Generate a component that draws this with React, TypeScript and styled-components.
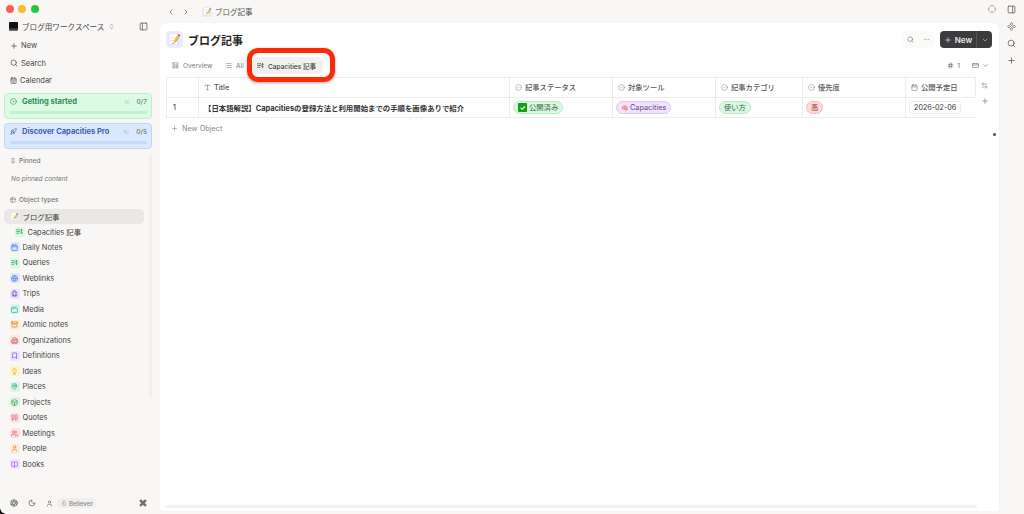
import React from "react";
import styled, { createGlobalStyle } from "styled-components";
import {
  Plus, Search, CalendarDays, CircleDot, EyeOff, Rocket, Pin, Table2, PanelRight, ChevronLeft, ChevronRight,
  ChevronsUpDown, ChevronDown, Ellipsis, List, LayoutPanelTop, Type, CircleCheck, ArrowLeftRight,
  Calendar, Globe, Luggage, Tv, Archive, Building2, Bookmark, Lightbulb, MapPin, Box, Quote, Users, User,
  BookOpen, Moon, Command, Flame, CircleDashed, Component, Hash, CreditCard, Aperture,
} from "lucide-react";

const GlobalStyle = createGlobalStyle`
  html, body { margin: 0; padding: 0; background: #f8f7f5; }
  body { font-family: Inter, "Noto Sans CJK JP", sans-serif; color: #3b3b3b; }
  * { box-sizing: border-box; }
`;

const Page = styled.div`
  position: relative;
  width: 1024px;
  height: 514px;
  overflow: hidden;
  display: flex;
  background: #f8f7f5;
`;

const Sidebar = styled.aside`
  position: relative;
  width: 160px;
  flex: none;
  display: flex;
  flex-direction: column;
  height: 514px;
`;

const TrafficLights = styled.div`
  display: flex;
  gap: 4.4px;
  padding: 4.5px 0 0 6px;
  height: 17px;
`;

const Light = styled.span<{ $c: string }>`
  width: 8px;
  height: 8px;
  border-radius: 50%;
  background: ${(p) => p.$c};
`;

const WorkspaceRow = styled.div`
  display: flex;
  align-items: center;
  height: 18px;
  padding: 0 12px 0 9px;
  font-size: 7.6px;
  color: #4a4a4a;
  gap: 4px;
`;

const WorkspaceLogo = styled.span`
  width: 9px;
  height: 9px;
  background: linear-gradient(#111 60%, #777);
  border-radius: 1px;
`;

const WorkspaceEnd = styled.span`
  margin-left: auto;
  display: flex;
  color: #555;
`;

const NavRow = styled.div`
  display: flex;
  align-items: center;
  gap: 3px;
  height: 17.5px;
  padding-left: 10px;
  font-size: 7.5px;
  color: #444;
`;

const NavGroup = styled.div`
  margin-top: 2px;
  margin-bottom: 3px;
`;

const TaskCard = styled.div<{ $blue?: boolean }>`
  margin: 0 8px 4px 4px;
  height: 26px;
  border-radius: 4px;
  border: 1px solid ${(p) => (p.$blue ? "#bcd6fb" : "#bdf0c9")};
  background: ${(p) => (p.$blue ? "#dbe9fe" : "#dcfbe4")};
  padding: 0 4px 0 5px;
  color: ${(p) => (p.$blue ? "#3f5fc4" : "#2f8f55")};
`;

const TaskTop = styled.div`
  display: flex;
  align-items: center;
  height: 16px;
  gap: 5px;
  font-size: 7.5px;
  font-weight: 700;
`;

const TaskCount = styled.span`
  margin-left: auto;
  display: flex;
  align-items: center;
  gap: 7px;
  font-size: 6.5px;
  font-weight: 600;
  color: #7f8a84;
`;

const TaskBar = styled.div<{ $blue?: boolean }>`
  height: 3px;
  margin: 1px 0 0 0;
  border-radius: 2px;
  background: ${(p) => (p.$blue ? "#c5daf9" : "#c3f1cf")};
`;

const SectionLabel = styled.div<{ $top: number }>`
  display: flex;
  align-items: center;
  gap: 3px;
  margin-top: ${(p) => p.$top}px;
  padding-left: 10px;
  height: 10px;
  font-size: 6.5px;
  font-weight: 500;
  color: #777;
`;

const EmptyNote = styled.div`
  padding-left: 11px;
  margin-top: 9px;
  height: 10px;
  font-size: 6.5px;
  font-style: italic;
  color: #777;
`;

const TypeRow = styled.div<{ $active?: boolean; $indent?: boolean }>`
  display: flex;
  align-items: center;
  gap: 3px;
  height: 15.5px;
  margin-right: 16px;
  margin-left: 4px;
  padding-left: ${(p) => (p.$indent ? "10.5px" : "5.5px")};
  font-size: 7.4px;
  color: #454545;
  border-radius: 5px;
  background: ${(p) => (p.$active ? "#e9e8e5" : "transparent")};
`;

const IconChip = styled.span<{ $bg: string; $fg: string }>`
  width: 10px;
  height: 10px;
  flex: none;
  display: inline-flex;
  align-items: center;
  justify-content: center;
  border-radius: 2.5px;
  background: ${(p) => p.$bg};
  color: ${(p) => p.$fg};
`;

const TypeList = styled.div`
  margin-top: 4px;
`;

const SideScroll = styled.div`
  position: absolute;
  left: 149px;
  top: 154px;
  width: 3px;
  height: 244px;
  border-radius: 2px;
  background: #f1f0ee;
`;

const SideFooter = styled.div`
  margin-top: auto;
  height: 22px;
  display: flex;
  align-items: center;
  padding: 0 10px;
  color: #555;
  gap: 10px;
`;

const Plan = styled.span`
  display: flex;
  align-items: center;
  gap: 2px;
  height: 10px;
  padding: 0 4px;
  margin-left: -6px;
  border-radius: 5px;
  background: #f0efed;
  color: #8c8c8c;
  font-size: 6.2px;
  font-weight: 500;
`;

const FooterEnd = styled.span`
  margin-left: auto;
  margin-right: 3px;
  display: flex;
  color: #333;
`;

const MainColumn = styled.div`
  flex: 1;
  min-width: 0;
  display: flex;
  flex-direction: column;
`;

const TopBar = styled.div`
  height: 23px;
  display: flex;
  align-items: center;
  padding-left: 7px;
  font-size: 7.5px;
  color: #555;
  gap: 7px;
`;

const Crumb = styled.span`
  display: flex;
  align-items: center;
  gap: 3px;
  margin-left: 5px;
`;

const Card = styled.main`
  position: relative;
  flex: 1;
  margin-bottom: 3px;
  background: #fff;
  border-radius: 6px 6px 2px 2px;
  box-shadow: 0 0 1px #e6e4e1;
  padding: 8px 0 0 6px;
  overflow: hidden;
`;

const TitleRow = styled.div`
  display: flex;
  align-items: center;
  height: 17px;
  gap: 5px;
`;

const BigIcon = styled.span`
  width: 17px;
  height: 17px;
  border-radius: 4px;
  background: #f1eafb;
  display: flex;
  align-items: center;
  justify-content: center;
  font-size: 10.5px;
`;

const Title = styled.h1`
  margin: 0;
  font-size: 11px;
  font-weight: 700;
  color: #222;
`;

const TitleTools = styled.div`
  margin-left: auto;
  margin-right: 7px;
  display: flex;
  align-items: center;
  gap: 5px;
`;

const GhostTools = styled.div`
  display: flex;
  align-items: center;
  justify-content: space-between;
  width: 33px;
  height: 17px;
  padding: 0 5px;
  border-radius: 5px;
  background: #fafaf8;
  color: #777;
`;

const NewButton = styled.div`
  display: flex;
  align-items: center;
  height: 17px;
  border-radius: 4px;
  background: #3c3c3e;
  color: #e8e8e8;
  font-size: 8px;
  font-weight: 600;
`;

const NewLabel = styled.span`
  display: flex;
  align-items: center;
  justify-content: center;
  gap: 3px;
  width: 37px;
  height: 100%;
  border-right: 1px solid #555;
`;

const NewCaret = styled.span`
  display: flex;
  justify-content: center;
  width: 15px;
`;

const TabsRow = styled.div`
  display: flex;
  align-items: center;
  height: 15px;
  margin-top: 10px;
  font-size: 6.6px;
  color: #777;
`;

const Tab = styled.div<{ $active?: boolean; $w: number }>`
  display: flex;
  align-items: center;
  gap: 4px;
  width: ${(p) => p.$w}px;
  height: 17px;
  padding-left: 6px;
  border-radius: 6px;
  background: ${(p) => (p.$active ? "#f2f1ef" : "transparent")};
  color: ${(p) => (p.$active ? "#444" : "#777")};
  font-weight: ${(p) => (p.$active ? 500 : 400)};
`;

const TabsEnd = styled.div`
  margin-left: auto;
  margin-right: 10px;
  display: flex;
  align-items: center;
  gap: 12px;
  color: #666;
`;

const Group = styled.span`
  display: flex;
  align-items: center;
  gap: 3px;
`;

const TableWrap = styled.div`
  display: flex;
  margin-top: 4px;
`;

const Grid = styled.div`
  width: 810px;
  flex: none;
  display: grid;
  grid-template-columns: 32px 311px 103px 103px 87px 103px 70px;
  grid-template-rows: 19.5px 20px;
  border-top: 1px solid #ececeb;
  border-left: 1px solid #ececeb;
  font-size: 7.3px;
`;

const HeadCell = styled.div`
  display: flex;
  align-items: center;
  gap: 3px;
  padding-left: 5px;
  border-right: 1px solid #ececeb;
  border-bottom: 1px solid #ececeb;
  color: #555;
  font-weight: 500;
  white-space: nowrap;
  overflow: hidden;
  &:last-child { border-right: 0; }
`;

const BodyCell = styled(HeadCell)<{ $pad?: number }>`
  padding-left: ${(p) => p.$pad ?? 3}px;
`;

const NumberCell = styled(BodyCell)`
  font-size: 7px;
  color: #444;
`;

const TitleText = styled.span`
  font-size: 7.4px;
  font-weight: 700;
  color: #333;
`;

const Pill = styled.span<{ $bg: string; $bd: string; $fg: string }>`
  display: inline-flex;
  align-items: center;
  gap: 2px;
  height: 13px;
  padding: 0 4px;
  border-radius: 7px;
  font-size: 7.3px;
  font-weight: 400;
  background: ${(p) => p.$bg};
  border: 1px solid ${(p) => p.$bd};
  color: ${(p) => p.$fg};
`;

const CheckBadge = styled.span`
  width: 9px;
  height: 9px;
  border-radius: 1px;
  background: #12a012;
  color: #fff;
  font-size: 7px;
  line-height: 9px;
  text-align: center;
  font-weight: 700;
`;

const DateBox = styled.span`
  display: inline-flex;
  align-items: center;
  height: 13px;
  padding: 0 4px;
  border: 1px solid #eeeeed;
  border-radius: 3px;
  color: #333;
  font-size: 7.2px;
  font-weight: 400;
`;

const TableSide = styled.div`
  display: flex;
  flex-direction: column;
  align-items: center;
  gap: 8px;
  width: 17px;
  padding-top: 5px;
  color: #777;
`;

const NewObject = styled.div`
  display: flex;
  align-items: center;
  gap: 4px;
  height: 12px;
  margin-top: 5px;
  padding-left: 5px;
  font-size: 7.3px;
  color: #8a8a8a;
`;

const BottomScroll = styled.div`
  position: absolute;
  left: 6px;
  right: 22px;
  bottom: 3px;
  height: 3px;
  border-radius: 2px;
  background: #f1f1f0;
`;

const Dot = styled.span`
  position: absolute;
  right: 3px;
  top: 110px;
  width: 3px;
  height: 3px;
  border-radius: 50%;
  background: #555;
`;

const Rail = styled.div`
  width: 25px;
  flex: none;
  display: flex;
  flex-direction: column;
  align-items: center;
  gap: 8px;
  padding-top: 5px;
  color: #555;
`;

const Highlight = styled.div`
  position: absolute;
  left: 247px;
  top: 48px;
  width: 88px;
  height: 34px;
  border: 5px solid #fb2b0a;
  border-radius: 11px;
  box-shadow: 0 1px 3px rgba(0, 0, 0, 0.35);
`;

const TopRightIcon = styled.span`
  position: absolute;
  left: 988px;
  top: 5px;
  display: flex;
  color: #666;
`;

const Corner = styled.span`
  position: absolute;
  left: 0;
  bottom: 0;
  width: 6px;
  height: 6px;
  background: radial-gradient(circle at 100% 0, transparent 5.5px, #111 6px);
`;

const emoji = "📝";

// lines on the left with an up-down arrow on the right, not in the icon packs
const QueryIcon: React.FC<{ size: number }> = ({ size }) => (
  <svg width={size} height={size} viewBox="0 0 24 24" fill="none" stroke="currentColor" strokeWidth="2.4" strokeLinecap="round" strokeLinejoin="round">
    <path d="M2 6h11M2 12h11M2 18h8" />
    <path d="M19 5v14M16 8l3-3 3 3M16 16l3 3 3-3" />
  </svg>
);

type TypeItem = { name: string; bg: string; fg: string; icon: React.ElementType };

const types: TypeItem[] = [
  { name: "Daily Notes", bg: "#dbe6fe", fg: "#3b6fd8", icon: Calendar },
  { name: "Queries", bg: "#d9f7e2", fg: "#3a9a5c", icon: QueryIcon },
  { name: "Weblinks", bg: "#dbe6fe", fg: "#3b6fd8", icon: Globe },
  { name: "Trips", bg: "#ece3fd", fg: "#7c4fd8", icon: Luggage },
  { name: "Media", bg: "#d2f5ef", fg: "#1f9b8a", icon: Tv },
  { name: "Atomic notes", bg: "#fdecc8", fg: "#c9781d", icon: Archive },
  { name: "Organizations", bg: "#fde2e2", fg: "#d04545", icon: Building2 },
  { name: "Definitions", bg: "#e8e3fe", fg: "#5f4fd8", icon: Bookmark },
  { name: "Ideas", bg: "#fdf5c5", fg: "#c9a01d", icon: Lightbulb },
  { name: "Places", bg: "#d5f5e6", fg: "#1f9b6a", icon: MapPin },
  { name: "Projects", bg: "#d5f5dc", fg: "#1f8f45", icon: Box },
  { name: "Quotes", bg: "#fde2e4", fg: "#d8455a", icon: Quote },
  { name: "Meetings", bg: "#fde2e4", fg: "#d8455a", icon: Users },
  { name: "People", bg: "#fdeadb", fg: "#d87a35", icon: User },
  { name: "Books", bg: "#efe3fd", fg: "#9a4fd8", icon: BookOpen },
];

const HeadIcon = () => <CircleCheck size={7} strokeWidth={1.5} color="#777" />;

const App: React.FC = () => {
  return (
    <Page>
      <GlobalStyle />
      <Sidebar>
        <TrafficLights>
          <Light $c="#ff5f57" />
          <Light $c="#febc2e" />
          <Light $c="#28c840" />
        </TrafficLights>
        <WorkspaceRow>
          <WorkspaceLogo />
          ブログ用ワークスペース
          <ChevronsUpDown size={7} color="#777" />
          <WorkspaceEnd>
            <PanelRight size={9} style={{ transform: "scaleX(-1)" }} />
          </WorkspaceEnd>
        </WorkspaceRow>
        <NavGroup>
          <NavRow><Plus size={8} />New</NavRow>
          <NavRow><Search size={8} />Search</NavRow>
          <NavRow><CalendarDays size={7} />Calendar</NavRow>
        </NavGroup>
        <TaskCard>
          <TaskTop>
            <CircleDot size={7} />
            Getting started
            <TaskCount><EyeOff size={6} color="#b5cfc0" />0/7</TaskCount>
          </TaskTop>
          <TaskBar />
        </TaskCard>
        <TaskCard $blue>
          <TaskTop>
            <Rocket size={7} />
            Discover Capacities Pro
            <TaskCount><EyeOff size={6} color="#a9bcd6" />0/5</TaskCount>
          </TaskTop>
          <TaskBar $blue />
        </TaskCard>
        <SectionLabel $top={3}><Pin size={6} />Pinned</SectionLabel>
        <EmptyNote>No pinned content</EmptyNote>
        <SectionLabel $top={10}><Table2 size={6} />Object types</SectionLabel>
        <TypeList>
          <TypeRow $active>
            <IconChip $bg="#ece8f3" $fg="#555" style={{ fontSize: 7 }}>{emoji}</IconChip>
            <span>ブログ記事</span>
          </TypeRow>
          <TypeRow $indent>
            <IconChip $bg="#d9f7e2" $fg="#3a9a5c"><QueryIcon size={7} /></IconChip>
            <span>Capacities 記事</span>
          </TypeRow>
          {types.map((t) => {
            const Icon = t.icon;
            return (
              <TypeRow key={t.name}>
                <IconChip $bg={t.bg} $fg={t.fg}><Icon size={7} /></IconChip>
                <span>{t.name}</span>
              </TypeRow>
            );
          })}
        </TypeList>
        <SideScroll />
        <SideFooter>
          <Aperture size={8} />
          <Moon size={8} />
          <User size={7} />
          <Plan><Flame size={6} />Believer</Plan>
          <FooterEnd><Command size={8} strokeWidth={2.5} /></FooterEnd>
        </SideFooter>
      </Sidebar>

      <MainColumn>
        <TopBar>
          <ChevronLeft size={8} />
          <ChevronRight size={8} />
          <Crumb>
            <IconChip $bg="#efecf5" $fg="#555" style={{ fontSize: 7 }}>{emoji}</IconChip>
            ブログ記事
          </Crumb>
        </TopBar>
        <Card>
          <TitleRow>
            <BigIcon>{emoji}</BigIcon>
            <Title>ブログ記事</Title>
            <TitleTools>
              <GhostTools>
                <Search size={7} />
                <Ellipsis size={7} color="#aaa" />
              </GhostTools>
              <NewButton>
                <NewLabel><Plus size={8} />New</NewLabel>
                <NewCaret><ChevronDown size={8} color="#bbb" /></NewCaret>
              </NewButton>
            </TitleTools>
          </TitleRow>
          <TabsRow>
            <Tab $w={53}><LayoutPanelTop size={7} />Overview</Tab>
            <Tab $w={32}><List size={7} />All</Tab>
            <Tab $active $w={72}><QueryIcon size={7} />Capacities 記事</Tab>
            <TabsEnd>
              <Group><Hash size={7} />1</Group>
              <Group><CreditCard size={7} /><ChevronDown size={7} /></Group>
            </TabsEnd>
          </TabsRow>
          <TableWrap>
            <Grid>
              <HeadCell />
              <HeadCell><Type size={7} color="#777" />Title</HeadCell>
              <HeadCell><HeadIcon />記事ステータス</HeadCell>
              <HeadCell><HeadIcon />対象ツール</HeadCell>
              <HeadCell><HeadIcon />記事カテゴリ</HeadCell>
              <HeadCell><HeadIcon />優先度</HeadCell>
              <HeadCell><Calendar size={7} color="#777" />公開予定日</HeadCell>

              <NumberCell $pad={6}>1</NumberCell>
              <BodyCell $pad={5}><TitleText>【日本語解説】Capacitiesの登録方法と利用開始までの手順を画像ありで紹介</TitleText></BodyCell>
              <BodyCell>
                <Pill $bg="#d8f8e0" $bd="#b6edc6" $fg="#3c6b4c"><CheckBadge>✓</CheckBadge>公開済み</Pill>
              </BodyCell>
              <BodyCell>
                <Pill $bg="#f0e3fc" $bd="#dfc6f7" $fg="#6b3f9a"><span style={{ fontSize: 6 }}>🧠</span>Capacities</Pill>
              </BodyCell>
              <BodyCell>
                <Pill $bg="#d8f8e0" $bd="#b6edc6" $fg="#3c6b4c">使い方</Pill>
              </BodyCell>
              <BodyCell>
                <Pill $bg="#fdd9d9" $bd="#f8bcbc" $fg="#9a3f3f">高</Pill>
              </BodyCell>
              <BodyCell><DateBox>2026-02-06</DateBox></BodyCell>
            </Grid>
            <TableSide>
              <ArrowLeftRight size={7} />
              <Plus size={8} />
            </TableSide>
          </TableWrap>
          <NewObject><Plus size={7} />New Object</NewObject>
          <Dot />
          <BottomScroll />
        </Card>
      </MainColumn>

      <Rail>
        <PanelRight size={9} />
        <Component size={9} />
        <Search size={9} />
        <Plus size={9} />
      </Rail>

      <TopRightIcon><CircleDashed size={8} /></TopRightIcon>
      <Highlight />
      <Corner />
    </Page>
  );
};

export default App;
